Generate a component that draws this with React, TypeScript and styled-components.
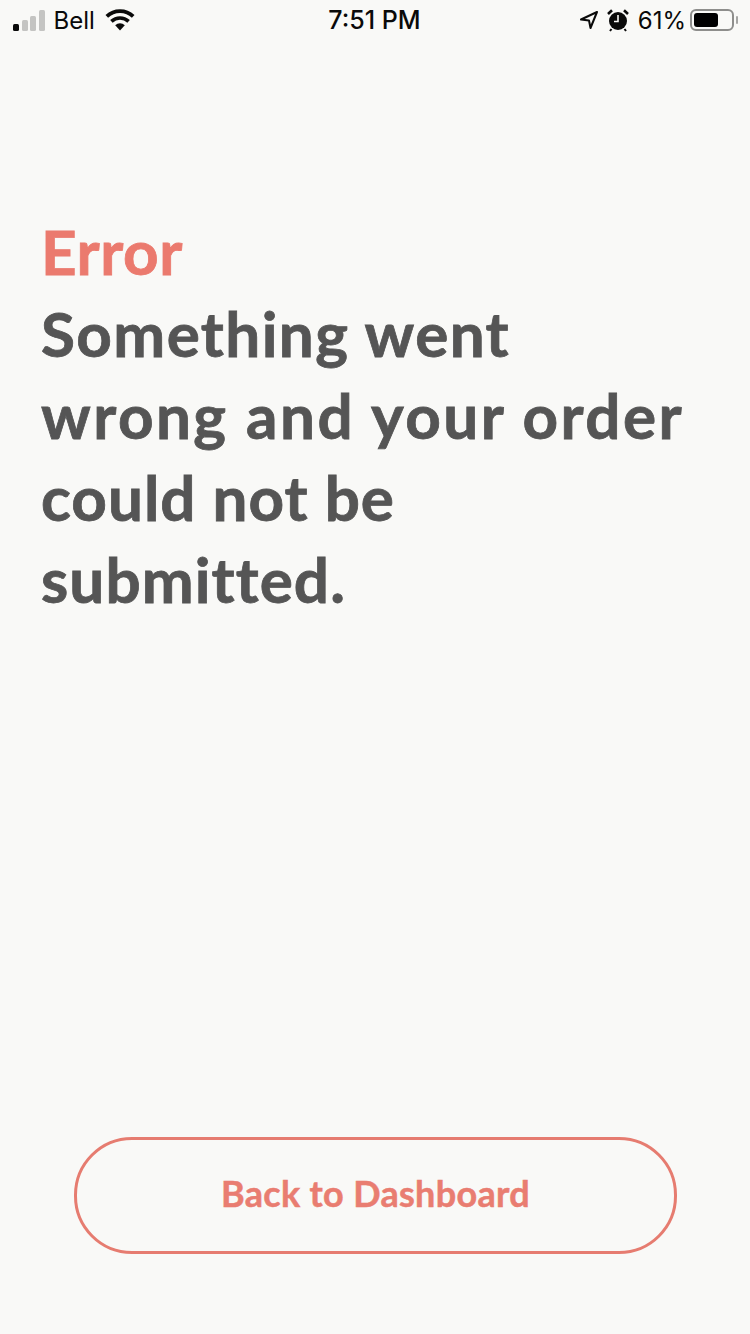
import React from "react";
import styled, { createGlobalStyle } from "styled-components";

const Global = createGlobalStyle`
  html, body { margin: 0; padding: 0; background: #f9f9f7; }
  #root { height: 1334px; }
`;

const Screen = styled.div`
  width: 750px;
  height: 1334px;
  box-sizing: border-box;
  background: #f9f9f7;
  display: flex;
  flex-direction: column;
  overflow: hidden;
`;

const StatusBar = styled.div`
  height: 40px;
  display: grid;
  grid-template-columns: 1fr auto 1fr;
  align-items: center;
  padding: 0 12px 0 13px;
  font-family: Inter, "Liberation Sans", sans-serif;
  font-size: 24px;
  color: #0a0a0a;
`;

const StatusLeft = styled.div`
  display: flex;
  align-items: center;
  gap: 9px;
`;

const StatusRight = styled.div`
  display: flex;
  align-items: center;
  justify-content: flex-end;
  gap: 8px;
`;

const Signal = styled.div`
  display: flex;
  align-items: flex-end;
  gap: 2.5px;
  height: 21px;
  margin-top: 1px;
`;

const SignalBar = styled.span<{ $h: number; $on?: boolean }>`
  width: 6px;
  height: ${(p) => p.$h}px;
  border-radius: 1.5px;
  background: ${(p) => (p.$on ? "#0a0a0a" : "#c4c4c2")};
`;

const Carrier = styled.span`
  margin-right: 1px;
`;

const Clock = styled.div`
  font-weight: 500;
  font-size: 25px;
  margin-right: 2px;
`;

const Percent = styled.span`
  font-size: 24px;
  margin-left: 1px;
  margin-right: -4px;
`;

const Battery = styled.div`
  width: 44px;
  height: 22px;
  box-sizing: border-box;
  border: 2px solid #8e8e8c;
  border-radius: 6px;
  padding: 2px;
  position: relative;
  margin-right: 4px;
  &::after {
    content: "";
    position: absolute;
    right: -6px;
    top: 5px;
    width: 2px;
    height: 8px;
    border-radius: 1px;
    background: #a5a5a3;
  }
`;

const BatteryFill = styled.div`
  width: 24px;
  height: 100%;
  background: #000;
  border-radius: 3px;
`;

const Content = styled.main`
  flex: 1;
  display: flex;
  flex-direction: column;
  padding: 170px 41px 0;
`;

const Heading = styled.h1`
  margin: 0;
  font-family: Lato, "Liberation Sans", sans-serif;
  font-weight: 700;
  font-size: 62px;
  line-height: 82px;
  -webkit-text-stroke: 0.8px currentColor;
`;

const ErrorWord = styled.span`
  display: block;
  color: #eb7a6e;
  letter-spacing: 0.6px;
`;

const Message = styled.span`
  display: block;
  color: #555555;
`;

const MessageLine = styled.span<{ $spacing: number }>`
  display: block;
  letter-spacing: ${(p) => p.$spacing}px;
`;

const Footer = styled.div`
  padding: 0 73px 80px 74px;
`;

const BackButton = styled.button`
  width: 100%;
  height: 117px;
  box-sizing: border-box;
  border: 3px solid #e67c70;
  border-radius: 58px;
  background: transparent;
  color: #e97d71;
  font-family: Lato, "Liberation Sans", sans-serif;
  font-weight: 700;
  font-size: 36px;
  letter-spacing: 0.3px;
  -webkit-text-stroke: 0.5px currentColor;
  padding: 0 0 6px;
`;

export default function App() {
  return (
    <Screen>
      <Global />
      <StatusBar>
        <StatusLeft>
          <Signal>
            <SignalBar $h={7} $on />
            <SignalBar $h={11} />
            <SignalBar $h={15} />
            <SignalBar $h={21} />
          </Signal>
          <Carrier>Bell</Carrier>
          <svg width="30" height="22" viewBox="0 0 30 22" aria-hidden="true">
            <path d="M15 21.5 10.2 16.2a7 7 0 0 1 9.6 0Z" fill="#0a0a0a" />
            <path d="M6.4 12.4a12.6 12.6 0 0 1 17.2 0" fill="none" stroke="#0a0a0a" strokeWidth="3.6" />
            <path d="M1.8 7.4a19.2 19.2 0 0 1 26.4 0" fill="none" stroke="#0a0a0a" strokeWidth="3.8" />
          </svg>
        </StatusLeft>
        <Clock>7:51 PM</Clock>
        <StatusRight>
          <svg width="20" height="20" viewBox="0 0 20 20" aria-hidden="true">
            <path d="M18 2 2 9.5l8 1 1.5 7.5Z" fill="none" stroke="#0a0a0a" strokeWidth="2" strokeLinejoin="round" />
          </svg>
          <svg width="22" height="24" viewBox="0 0 22 24" aria-hidden="true">
            <circle cx="11" cy="13" r="9" fill="#0a0a0a" />
            <path d="M11 7v6.5H7" fill="none" stroke="#f9f9f7" strokeWidth="1.6" />
            <path d="M1 6 5 2.2M21 6l-4-3.8" stroke="#0a0a0a" strokeWidth="2.6" />
            <path d="M4.5 21 3 23M17.5 21l1.500 2" stroke="#0a0a0a" strokeWidth="2" />
          </svg>
          <Percent>61%</Percent>
          <Battery>
            <BatteryFill />
          </Battery>
        </StatusRight>
      </StatusBar>
      <Content>
        <Heading>
          <ErrorWord>Error</ErrorWord>
          <Message>
            <MessageLine $spacing={1.4}>Something went</MessageLine>
            <MessageLine $spacing={2.45}>wrong and your order</MessageLine>
            <MessageLine $spacing={1}>could not be</MessageLine>
            <MessageLine $spacing={1.1}>submitted.</MessageLine>
          </Message>
        </Heading>
      </Content>
      <Footer>
        <BackButton>Back to Dashboard</BackButton>
      </Footer>
    </Screen>
  );
}
